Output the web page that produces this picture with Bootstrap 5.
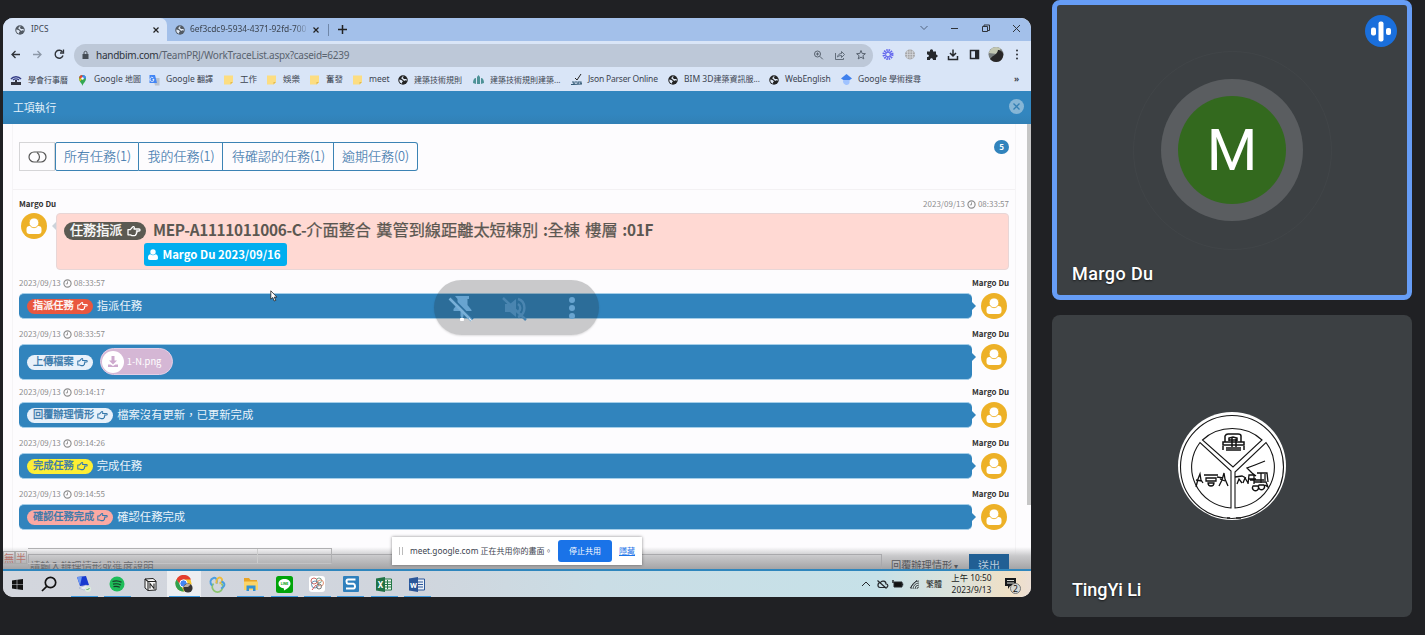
<!DOCTYPE html>
<html lang="zh-Hant">
<head>
<meta charset="utf-8">
<title>IPCS</title>
<link rel="stylesheet" href="https://cdn.jsdelivr.net/npm/bootstrap@5.3.0/dist/css/bootstrap.min.css">
<script src="https://cdn.jsdelivr.net/npm/bootstrap@5.3.0/dist/js/bootstrap.bundle.min.js"></script>
<style>
body{background:#202124;width:1425px;height:635px;overflow:hidden;font-family:"Noto Sans CJK TC",sans-serif;line-height:1}
svg{display:block;flex:none}
.shared{width:1028px;height:579px;margin:18px 0 0 3px;border-radius:10px;background:#fdfcfe;flex:none}
.ui{font-family:"Noto Sans","Noto Sans CJK TC",sans-serif;color:#3c4450}
/* browser chrome */
.strip{height:23px;background:#a3c0ea}
.tab{width:164px;background:#d9e5f7;border-radius:6px 7px 0 0;padding-left:12px;font-size:8.2px}
.tab2{width:153px;padding-left:8px;font-size:8.4px}
.fade-end{width:120px;white-space:nowrap;-webkit-mask-image:linear-gradient(90deg,#000 88%,transparent);mask-image:linear-gradient(90deg,#000 88%,transparent)}
.tools{height:27px;background:#d9e5f7}
.pill{width:799px;height:23px;background:#bdc8d8;border-radius:12px;font-size:10px;letter-spacing:-.25px;color:#59636f;padding:0 5px 0 7px;margin-top:1px}
.marks{height:23px;background:#d9e5f7;display:grid;grid-template-columns:67px 72px 74px 43px 43px 43px 46px 75px 98px 97px 101px 72px 173px 20px;padding-left:7px;align-items:center;font-size:8.5px;white-space:nowrap}
.marks>span{display:flex;align-items:center;gap:6px}
.cj{font-size:8.5px}
.cj8{font-size:8px}
.bluebar{height:33px;background:linear-gradient(#3286bf 70%,#3180b5);color:#e6f2fa;padding:0 7px 0 10px;font-size:10.8px}
/* page */
.page-area{height:445px;overflow:hidden;position:relative}
.panel{width:1004px;margin-left:9px;border:solid #f5f4f6;border-width:0 1px;height:445px;padding:18px 6px 0 6px}
.filters{height:29px}
.filters>span{border:1px solid #3c83b4;border-left-width:0;color:#3c77ac;font-size:13px;font-weight:300;-webkit-text-stroke:.12px;display:flex;align-items:center;justify-content:center;height:29px;padding:0 0 2px 1px}
.filters>span:first-child{border-color:#d5d5d7;border-left-width:1px;color:#555;width:36px;padding:0}
.filters>span:nth-child(2){border-left-width:1px;border-radius:2px 0 0 2px}
.filters>span:last-child{border-radius:0 3px 3px 0}
.count{width:15px;height:14px;border-radius:7px;background:#3183bc;color:#fff;font-weight:700;font-size:8px;margin-top:-2px}
.rule{height:1px;background:#f3f1f3;margin:18px -6px 8px}
.who{font-weight:700;font-size:8px;color:#333;height:12px;line-height:12px;white-space:nowrap}
.when{font-size:8px;color:#8e8e8e;height:12px;line-height:12px;display:flex;gap:2px;align-items:center}
.pink{width:953px;height:57px;background:#ffd9d3;border:1px solid #e8d6d6;border-radius:4px;position:relative;padding:7px 0 0 7px}
.pink:before{content:"";position:absolute;left:-5px;top:8px;border:4px solid transparent;border-right-color:#ccd3da;border-left:0}
.tagp{border-radius:20px;display:inline-flex;align-items:center;-webkit-text-stroke:.3px;white-space:nowrap}
.headline{font-size:16.2px;color:#5b5751;white-space:nowrap;word-spacing:1.600px;-webkit-text-stroke:.25px}
.headline b{-webkit-text-stroke:0;font-size:15.3px;letter-spacing:-.3px}
.due{width:143px;height:23px;background:#00aeef;border-radius:3px;color:#fff;font-weight:700;font-size:11.4px;margin:2px 0 0 80px;padding-right:2px}
.entry{height:51px}
.bar{width:953px;height:26px;background:#3184bd;border:1px solid #a6cfe9;border-width:1px 0;border-radius:5px;position:relative;padding:0 0 1px 8px;color:#e9f3fa;font-size:11.35px;margin-top:4px}
.bar:after{content:"";position:absolute;right:-4px;top:8px;border:4px solid transparent;border-left-color:#3184bd;border-right:0}
.bar .tagp{font-size:10.2px;height:15px;padding:0 5px 1px 6px;gap:3px;margin:1px 4px 0 0;color:#3678ab;background:#e8f1fa}
.right-col{width:37px}
.right-col svg{margin:4px 0 0 9px}
.file{width:73px;height:27px;border-radius:14px;background:#d5b7d5;border:1px solid #e4cfe6;color:#fff;font-size:9.4px;margin-left:3px;padding-left:1px;gap:3px}
.thumb{position:absolute;right:0;top:0;width:4px;height:381px;background:#c6c6c6}
.replybar{position:absolute;left:0;right:0;bottom:0;height:22px;background:linear-gradient(rgba(160,160,162,0),#c9c9cb 40%,#a4a4a6);overflow:hidden}
.replybar .reply{margin:7px 0 0 25px;width:981px;height:30px;font-size:11px;color:#6c6d70}
.reply>span{height:30px;padding-top:6px}
.ime{position:absolute;left:0;top:4px;font-size:10px;color:#b5736c}
.ime i{font-style:normal;border:1px solid #aaa;width:12px;height:13px;display:flex;align-items:center;justify-content:center}
.outl{position:absolute;left:25px;top:1px;width:304px;height:16px;border:1px solid #b0b0b2;border-bottom-color:#c3c3c5;border-left:0}
.outl:before{content:"";position:absolute;left:229px;top:0;height:14px;border-left:1px solid #ccc}
.sharebox{position:absolute;left:389px;top:413px;width:250px;height:28px;background:#fff;box-shadow:0 0 3px rgba(0,0,0,.45);font-size:8.3px;padding-left:7px}
.stop{background:#1a73e8;color:#fff;border-radius:3px;width:54px;height:22px;font-size:8px}
.hover-pill{position:absolute;left:431px;top:156px;width:165px;height:55px;border-radius:28px;background:rgba(32,33,36,.23);box-shadow:0 1px 2px rgba(0,0,0,.12)}
.pointer{position:absolute;left:267px;top:166px}
/* taskbar */
.task{height:28px;border-top:2px solid #2f86bd;background:linear-gradient(90deg,#d3d6dd 0,#d0d5dd 40%,#cadde5 58%,#c6e1e8 85%,#dde2da 93%,#f0e0c5 98%,#ecdfd5)}
.app{width:33.35px;height:26px;display:flex;align-items:center;justify-content:center}
.open{background:linear-gradient(#3b97dd,#3b97dd) center bottom/27px 1.5px no-repeat}
.app.front{background:linear-gradient(#3b97dd,#3b97dd) center bottom/31px 1.5px no-repeat,#eceef1}
/* call tiles */
.tile{width:360px;background:#3c4043;border-radius:8px;position:relative}
.t1{height:300px;border:5px solid #669df6}
.t2{height:302px;margin-top:15px}
.nm{position:absolute;left:20px;bottom:18px;font-family:Roboto,sans-serif;font-weight:500;font-size:18px;letter-spacing:-.1px;color:#fff;text-shadow:0 1px 2px rgba(0,0,0,.6)}
.t1 .nm{left:15px;bottom:12px;letter-spacing:.4px}
.ring{position:absolute;border-radius:50%}
.audio{position:absolute;right:10px;top:10px}
</style>
</head>
<body>
<svg width="0" height="0" class="position-absolute">
<symbol id="globe" viewBox="0 0 16 16"><circle cx="8" cy="8" r="7.600" fill="currentColor"/><path d="M2.200 7 5.500 8l2.500 2-1.500 1.500v2.300A6.300 6.300 0 0 1 2.200 7M9.500 2.200 7.500 4.500 9.700 6.500l4-.3.4 2.800-2.500-.8-1.600 1.300L6.500 6.500 5 5.200l2-3z" fill="#dfe8f5"/></symbol>
<symbol id="hand" viewBox="0 0 14 12"><path d="M1 4.600h2.300L5.600 2c.5-.8 1.900-.5 1.700.7L7 4h5c1.400 0 1.400 2 0 2H9.400c.9.300.9 1.600-.1 1.800.6.600.2 1.500-.6 1.600.2.900-.3 1.200-1.200 1.200H5L3.400 9.800H1z" fill="none" stroke="currentColor" stroke-width="1.300" stroke-linejoin="round"/></symbol>
<symbol id="clk" viewBox="0 0 10 10"><circle cx="5" cy="5" r="4" fill="none" stroke="currentColor" stroke-width="1.300"/><path d="M5 2.600v2.800H3.200" fill="none" stroke="currentColor"/></symbol>
<symbol id="ava" viewBox="0 0 26 26"><circle cx="13" cy="13" r="13" fill="#edb127"/><rect x="5.500" y="13" width="15" height="8" rx="3" fill="#fff"/><circle cx="13" cy="9.800" r="4.900" fill="#fff" stroke="#edb127" stroke-width=".9"/></symbol>
<symbol id="note" viewBox="0 0 10 10"><path d="M.5.500h9V7L7 9.500H.500z" fill="#fcdd82"/><path d="M9.500 7H7v2.500z" fill="#e2b94c"/></symbol>
</svg>
<div class="d-flex">
<div class="shared overflow-hidden">
  <div class="strip ui d-flex align-items-stretch">
    <div class="tab d-flex align-items-center"><svg width="10" height="10" color="#525a64"><use href="#globe"/></svg><span class="ms-1 me-auto" style="padding-left:2px">IPCS</span><svg class="me-2" width="6" height="6" viewBox="0 0 6 6"><path d="m.5.500 5 5m0-5-5 5" stroke="#222" stroke-width="1.200"/></svg></div>
    <div class="tab2 d-flex align-items-center"><svg width="10" height="10" color="#525a64"><use href="#globe"/></svg><span class="fade-end me-1" style="margin-left:5px;width:119px">6ef3cdc9-5934-4371-92fd-700</span><svg width="6" height="6" viewBox="0 0 6 6"><path d="m.5.500 5 5m0-5-5 5" stroke="#222" stroke-width="1.200"/></svg></div>
    <svg width="30" height="23" viewBox="0 0 30 23"><path d="M8.500 6v12" stroke="#6f87a9"/><path d="M18 11.500h9M22.500 7v9" stroke="#222" stroke-width="1.500"/></svg>
    <svg class="ms-auto" width="118" height="23" viewBox="0 0 118 23" fill="none" stroke="#30343a"><path d="m7.500 8 3.500 3.500L14.500 8" stroke="#53647f"/><path d="M38 10.500h7"/><path d="M69.500 8.500h5v5h-5zM71 8V7h5.500v5.500H75"/><path d="m100 7 7 7m0-7-7 7"/></svg>
  </div>
  <div class="tools d-flex align-items-center">
    <svg width="71" height="27" viewBox="0 0 71 27" fill="none" stroke="#30343a" stroke-width="1.300"><path d="M17 13.500H9m3.500-3.500L9 13.500l3.500 3.500"/><path d="M30 13.500h8M34.500 10l3.500 3.500-3.500 3.500" stroke="#8d98a8"/><path d="M59.500 11A4 4 0 1 0 60 14.500" stroke-width="1.400"/><path d="M60.500 8.500v3.500H57"/></svg>
    <div class="pill ui d-flex align-items-center">
      <svg width="9" height="10" viewBox="0 0 9 10"><path d="M1.500 4h6v5h-6z" fill="#454c55"/><path d="M3 4.500V2.800a1.500 1.500 0 0 1 3 0v1.700" fill="none" stroke="#454c55"/></svg>
      <span style="margin-left:6px"><span style="color:#2d333b">handbim.com</span>/TeamPRJ/WorkTraceList.aspx?caseid=6239</span>
      <svg class="ms-auto" width="55" height="12" viewBox="0 0 55 12" fill="none" stroke="#58626f"><circle cx="4.500" cy="5" r="3"/><path d="m6.800 7.300 3 3M3 5h3M4.500 3.500v3"/><path d="M22.500 4v6.500h8V9M24.500 8c.5-2.500 2-3.500 4-3.500V2.500l3 3-3 3V6.500c-2 0-3 .5-4 1.500z" stroke-width=".9"/><path d="m48 1.500 1.200 3 3.200.2-2.500 2 .9 3.200L48 8.100l-2.800 1.800.9-3.200-2.500-2 3.200-.2z"/></svg>
    </div>
    <svg width="158" height="27" viewBox="0 0 158 27"><g stroke="#6366ee" stroke-width="1.500" fill="none"><circle cx="15" cy="13.500" r="3.700" stroke-dasharray="1.200 .74" stroke-width="3.600"/><circle cx="15" cy="13.500" r="2.400" stroke-width="1"/></g><circle cx="37" cy="13.500" r="5" fill="#a6a6a8"/><path d="M32 13.500h10M37 8.500v10M33 11h8M33 16h8M34.500 9.500v8M39.500 9.500v8" stroke="#d7dae0" stroke-width=".7"/><path d="M54 10.500h3c-.6-3 3.600-3 3 0h3v3c2.200 0 2.200 3 0 3v2.500h-3c0-2.500-3-2.500-3 0h-3V16c2.600 0 2.600-2.600 0-2.600z" fill="#25282d"/><path d="M80 8.500v6.500M77 12l3 3 3-3M75.500 15v3.500h9V15" fill="none" stroke="#25282d" stroke-width="1.500"/><path d="M97.500 9.500h8v8h-8z" fill="none" stroke="#25282d" stroke-width="1.500"/><path d="M102 9h4v9h-4z" fill="#25282d"/><circle cx="123" cy="13.500" r="7.500" fill="#777c7c"/><path d="M115.800 12a7.500 7.500 0 0 1 12-4.300L124 13z" fill="#c3c7b2"/><path d="M117 18c3-4 7-4 8-9 2 0 5 2 5.300 4-.1 9-9 10-13.300 5" fill="#292728"/><g fill="#30343a"><circle cx="144" cy="9.500" r="1"/><circle cx="144" cy="13.500" r="1"/><circle cx="144" cy="17.500" r="1"/></g></svg>
  </div>
  <div class="marks ui">
    <span><svg width="12" height="12" viewBox="0 0 12 12"><path d="M1 5a6 5 0 0 1 10 0M3 6a4 3 0 0 1 6 0" fill="none" stroke="#353d88" stroke-width="1.500"/><path d="M1 8h10v3H1zM5 6h2v3H5z" fill="#343640"/></svg><span class="cj8">學會行事曆</span></span>
    <span><svg width="11" height="12" viewBox="0 0 11 12"><path d="M5.500 12C5 9 2 8 2 4.500a3.500 3.500 0 0 1 7 0C9 8 6 9 5.500 12" fill="#34a853"/><path d="M2.100 4A3.500 3.500 0 0 1 5.500 1v3z" fill="#ea4335"/><path d="M5.500 1A3.500 3.500 0 0 1 9 4.500H5.500z" fill="#4285f4"/><path d="M2 4.500h3L3 7.500z" fill="#fbbc04"/><circle cx="5.500" cy="4.500" r="1.200" fill="#fff"/></svg><span>Google <span class="cj8">地圖</span></span></span>
    <span><svg width="11" height="12" viewBox="0 0 11 12"><path d="M4 4h6.500v7.500H6z" fill="#b9c2ce"/><path d="M.5 1H6l2 8H.500z" fill="#4285f4"/><path d="M5 5.500a2 2 0 1 1-.6-1.500M5 5.500H3.500" stroke="#fff" stroke-width=".8" fill="none"/></svg><span>Google <span class="cj8">翻譯</span></span></span>
    <span><svg width="11" height="10"><use href="#note"/></svg><span class="cj">工作</span></span>
    <span><svg width="11" height="10"><use href="#note"/></svg><span class="cj">娛樂</span></span>
    <span><svg width="11" height="10"><use href="#note"/></svg><span class="cj">奮發</span></span>
    <span><svg width="11" height="10"><use href="#note"/></svg><span>meet</span></span>
    <span><svg width="10" height="10" color="#222"><use href="#globe"/></svg><span class="cj8">建築技術規則</span></span>
    <span><svg width="11" height="10" viewBox="0 0 11 10"><path d="M0 8c0-3 1-5 3-5v6zM4 9V2l1.500-2L7 2v7zM8 9V3c2 0 3 2 3 5z" fill="#4e9297"/></svg><span class="cj8">建築技術規則建築...</span></span>
    <span><svg width="11" height="11" viewBox="0 0 11 11"><path d="m4 4 2 2 4-6" fill="none" stroke="#222"/><path d="M0 10.500 11 10M1 8h2v2M4 8h2M7 10V8h3v2" stroke="#355b77" stroke-width="1.200" fill="none"/></svg><span style="letter-spacing:-.2px">Json Parser Online</span></span>
    <span><svg width="10" height="10" color="#222"><use href="#globe"/></svg><span>BIM 3D<span class="cj8">建築資訊服...</span></span></span>
    <span><svg width="10" height="10" color="#222"><use href="#globe"/></svg><span style="letter-spacing:-.1px">WebEnglish</span></span>
    <span><svg width="11" height="11" viewBox="0 0 11 11"><path d="M5.500 0 11 4.500 5.500 8 0 4.500z" fill="#3f80ed"/><path d="M2.500 6a3 3 0 0 0 6 3V6z" fill="#a0c3ff"/></svg><span>Google <span class="cj8">學術搜尋</span></span></span>
    <b>»</b>
  </div>
  <div class="bluebar d-flex align-items-center justify-content-between"><span>工項執行</span><svg width="15" height="15" viewBox="0 0 15 15" style="margin-bottom:2px"><circle cx="7.500" cy="7.500" r="7.500" fill="#86b6d6"/><path d="m4.500 4.500 6 6m0-6-6 6" stroke="#3580b4" stroke-width="1.300"/></svg></div>

  <div class="page-area">
    <div class="panel">
      <div class="d-flex justify-content-between align-items-center">
        <div class="filters d-flex"><span><svg width="19" height="12" viewBox="0 0 19 12" fill="none" stroke="#555" stroke-width="1.200"><rect x="1" y="1" width="17" height="10" rx="5"/><path d="M9 1.500a5.300 5.300 0 0 1 0 9"/></svg></span><span style="width:84px">所有任務(1)</span><span style="width:84px">我的任務(1)</span><span style="width:111px">待確認的任務(1)</span><span style="width:84px;padding-left:0">逾期任務(0)</span></div>
        <div class="count d-flex align-items-center justify-content-center align-self-start">5</div>
      </div>
      <div class="rule"></div>
      <div class="d-flex justify-content-between"><span class="who">Margo Du</span><span class="when">2023/09/13 <svg width="9" height="9"><use href="#clk"/></svg> 08:33:57</span></div>
      <div class="d-flex" style="height:67px;padding-top:3px">
        <svg width="26" height="26" style="margin:0 9px 0 2px"><use href="#ava"/></svg>
        <div class="pink">
          <div class="d-flex align-items-center" style="height:20px"><span class="tagp" style="background:#5b5a52;color:#fff;font-size:13.100px;width:82px;height:18px;padding:0 5px 2px 6px;gap:5px">任務指派<svg width="14" height="12" style="margin-top:2px"><use href="#hand"/></svg></span><span class="headline" style="margin:-4px 0 0 7px"><b>MEP-A1111011006-C-</b>介面整合 糞管到線距離太短棟別<b> :</b>全棟 樓層<b> :01F</b></span></div>
          <div class="due d-flex align-items-center justify-content-center gap-1"><svg width="10" height="11" viewBox="0 0 10 11" fill="#fff"><circle cx="5" cy="3" r="2.700"/><path d="M0 9c0-3 1-3.500 2.500-3.800a4 4 0 0 0 5 0C9 5.500 10 6 10 9c0 1.300-.5 2-2 2H2C.5 11 0 10.300 0 9"/></svg>Margo Du 2023/09/16</div>
        </div>
      </div>
      <div class="entry d-flex"><div><div class="when">2023/09/13 <svg width="9" height="9"><use href="#clk"/></svg> 08:33:57</div><div class="bar d-flex align-items-center"><span class="tagp" style="background:#e9573f;color:#fff">指派任務<svg width="11" height="10"><use href="#hand"/></svg></span>指派任務</div></div><div class="right-col"><div class="who">Margo Du</div><svg width="26" height="26"><use href="#ava"/></svg></div></div>
      <div class="entry d-flex" style="height:58px"><div><div class="when">2023/09/13 <svg width="9" height="9"><use href="#clk"/></svg> 08:33:57</div><div class="bar d-flex align-items-center" style="height:36px"><span class="tagp">上傳檔案<svg width="11" height="10"><use href="#hand"/></svg></span><span class="file d-flex align-items-center"><svg width="22" height="22" viewBox="0 0 22 22"><circle cx="11" cy="11" r="11" fill="#fff"/><path d="M9.500 5h3v4.500H15L11 13.500 7 9.500h2.500zM6 13.500h2.500l2.500 1.500 2.500-1.500H16V16H6z" fill="#cda9cd"/></svg>1-N.png</span></div></div><div class="right-col"><div class="who">Margo Du</div><svg width="26" height="26"><use href="#ava"/></svg></div></div>
      <div class="entry d-flex"><div><div class="when">2023/09/13 <svg width="9" height="9"><use href="#clk"/></svg> 09:14:17</div><div class="bar d-flex align-items-center"><span class="tagp">回覆辦理情形<svg width="11" height="10"><use href="#hand"/></svg></span>檔案沒有更新，已更新完成</div></div><div class="right-col"><div class="who">Margo Du</div><svg width="26" height="26"><use href="#ava"/></svg></div></div>
      <div class="entry d-flex"><div><div class="when">2023/09/13 <svg width="9" height="9"><use href="#clk"/></svg> 09:14:26</div><div class="bar d-flex align-items-center"><span class="tagp" style="background:#fcee35">完成任務<svg width="11" height="10"><use href="#hand"/></svg></span>完成任務</div></div><div class="right-col"><div class="who">Margo Du</div><svg width="26" height="26"><use href="#ava"/></svg></div></div>
      <div class="entry d-flex"><div><div class="when">2023/09/13 <svg width="9" height="9"><use href="#clk"/></svg> 09:14:55</div><div class="bar d-flex align-items-center"><span class="tagp" style="background:#fba9a3">確認任務完成<svg width="11" height="10"><use href="#hand"/></svg></span>確認任務完成</div></div><div class="right-col"><div class="who">Margo Du</div><svg width="26" height="26"><use href="#ava"/></svg></div></div>
    </div>
    <div class="thumb"></div>
    <div class="replybar">
      <div class="reply d-flex"><span style="width:854px;border:1px solid #a9a9ac;padding-left:1px;font-size:10.300px">請輸入辦理情形或進度說明</span><span style="width:87px;padding-left:9px;color:#55565a;font-size:10.200px">回覆辦理情形 <span style="font-size:8px">▾</span></span><span class="text-center" style="width:40px;background:#215f94;color:#b9cbdb">送出</span></div>
      <div class="outl"></div>
      <div class="ime d-flex"><i>無</i><i>半</i></div>
    </div>
    <div class="sharebox ui d-flex align-items-center"><svg width="4" height="8" viewBox="0 0 4 8"><path d="M.5 0v8M3.500 0v8" stroke="#bbb"/></svg><span style="margin-left:7px;width:148px;white-space:nowrap">meet.google.com <span class="cj8">正在共用你的畫面。</span></span><span class="stop d-flex align-items-center justify-content-center">停止共用</span><u style="margin-left:7px;color:#1a73e8;font-size:8px">隱藏</u></div>
    <div class="hover-pill"><svg width="165" height="55" viewBox="0 0 165 55"><g fill="#68a4d0"><path d="M21 16h14v3h-1.500v6l4 5v1h-8v5l-1.500 4-1.500-4v-5h-7v-2l4-5v-5z"/><path d="m17 17 22 22" stroke="#2f709e" stroke-width="2"/><path d="m15.500 18.500 22 22" stroke="#79b0d8" stroke-width="2.500"/><path d="M26.500 38.500h3v2h-3zM35 38.500l2.500 2" fill="#fff" stroke="#fff"/><circle cx="138" cy="20" r="3"/><circle cx="138" cy="28" r="3"/><circle cx="138" cy="36" r="3"/></g><g fill="none" stroke="#4a85b0" stroke-width="2.500"><path d="M71 24h5l6-5v18l-6-5h-5z" fill="#4a85b0" stroke="none"/><path d="M84 24c3 2 3 6 0 8M84 19c8 2 9 15 0 18M69 18l23 22"/></g></svg></div>
    <svg class="pointer" width="8" height="12" viewBox="0 0 8 12"><path d="M.8.800v8.400l2-1.700L4.200 11l1.600-.6-1.500-3.300h2.600z" fill="#fff" stroke="#222" stroke-width=".8"/></svg>
  </div>

  <div class="task d-flex align-items-center">
    <span class="app" style="width:31px;padding-right:3px"><svg width="11" height="11" viewBox="0 0 11 11"><path d="m0 1.500 4.700-.7v4.400H0zM5.300.700 11 0v5.200H5.300zM0 5.800h4.700v4.400L0 9.500zM5.300 5.800H11V11l-5.700-.8z" fill="#111"/></svg></span>
    <span class="app" style="padding-right:3px"><svg width="16" height="16" viewBox="0 0 16 16" fill="none" stroke="#111" stroke-width="1.700"><circle cx="9.500" cy="6.500" r="5.200"/><path d="M5.700 10.300 1 15"/></svg></span>
    <span class="app open"><svg width="16" height="16" viewBox="0 0 16 16"><path d="m1 1 9-1 3 9-9 1z" fill="#173bd0"/><path d="M1 1 6 .4 4 9.500z" fill="#6f9af2"/><path d="m3 12 7-3 4 2-6 3z" fill="#e7ecf5" stroke="#90a3c4" stroke-width=".5"/><circle cx="12" cy="13" r="3" fill="#dcebdd"/><path d="m10.500 13 1 1 2-2" stroke="#4da95d" fill="none"/></svg></span>
    <span class="app open"><svg width="16" height="16" viewBox="0 0 16 16"><circle cx="8" cy="8" r="7.500" fill="#1ebc59"/><path d="M3.500 5.500c3-1 6.500-.7 9 .8M4 8.200c3-.8 5.500-.5 7.800.8M4.500 10.700c2.500-.6 4.500-.3 6.300.6" fill="none" stroke="#173e28" stroke-width="1.200"/></svg></span>
    <span class="app"><svg width="13" height="13" viewBox="0 0 13 13"><path d="m1 1 8-.5L12 3v9l-8 .5L1 10z" fill="#f7f7f7" stroke="#222"/><path d="M4 3.500h8M4 3.500v9M1 1l3 2.500M6 10.500V5.500l4 5v-5" stroke="#222" fill="none" stroke-width="1.100"/></svg></span>
    <span class="app front"><svg width="18" height="18" viewBox="0 0 18 18"><circle cx="8.500" cy="8.500" r="8" fill="#f7c62d"/><path d="M1.500 4.500a8 8 0 0 1 14.500 0H8.500L5 10z" fill="#e43e2e"/><path d="M1.500 4.500 6 11l3 5.500a8 8 0 0 1-7.500-12" fill="#2fa14f"/><circle cx="8.500" cy="8.500" r="3.700" fill="#4285f4" stroke="#fff"/><circle cx="13" cy="13" r="4.600" fill="#363433"/><path d="M8.600 12a4.600 4.600 0 0 1 7-2.500L13 12z" fill="#b9aca0"/></svg></span>
    <span class="app"><svg width="17" height="17" viewBox="0 0 17 17" fill="none" stroke-width="1.900"><path d="M4.500 7.500a5.200 5.200 0 1 0 8 0" stroke="#8cc56f"/><path d="M7.500 7.500C9 4.500 7 1 4.500 2 1 3 .5 7 3 9.500" stroke="#4a9ee0"/><path d="M7.500 7.500C7 3.500 9.500.5 12 2c2 1.500 1 4.500-1.500 5.500" stroke="#eebc3b"/><path d="M12.500 5.500c4 1.500 4 5-.5 7" stroke="#4a9ee0"/></svg></span>
    <span class="app open"><svg width="16" height="15" viewBox="0 0 16 15"><path d="M1 1h5l1.500 2H14v10H1z" fill="#e8a427"/><path d="M1 4.500h14V13H1z" fill="#fbd468"/><path d="M3.500 14V8.500h9V14H10v-2.500H6V14z" fill="#3292d4"/></svg></span>
    <span class="app open"><svg width="17" height="17" viewBox="0 0 17 17"><rect width="17" height="17" rx="2.500" fill="#00a409"/><path d="M8.500 3C5 3 2.500 5 2.500 7.700c0 2.500 2 4.100 5 4.600.6.200.6 1 .4 2.200 3-1.500 6.600-4 6.600-6.800C14.500 5 12 3 8.500 3" fill="#fff"/><text x="8.500" y="9" font-size="3.500" font-weight="700" text-anchor="middle" fill="#00a409" font-family="Roboto">LINE</text></svg></span>
    <span class="app open"><svg width="16" height="16" viewBox="0 0 16 16"><rect width="16" height="16" rx="3" fill="#fff"/><g fill="none" stroke-width=".9"><circle cx="5" cy="5" r="3" stroke="#cb5b57"/><circle cx="10" cy="4.500" r="2.500" stroke="#6b9c86"/><circle cx="6" cy="8.500" r="3.500" stroke="#5b87ab"/><circle cx="11.500" cy="7" r="3" stroke="#dc8765"/><circle cx="10" cy="10.500" r="2.500" stroke="#666"/><path d="m3 14 4-5" stroke="#d94747"/></g></svg></span>
    <span class="app open"><svg width="16" height="16" viewBox="0 0 16 16"><rect width="16" height="16" rx="1" fill="#2f80bd"/><path d="M12.500 3.500H5c-2 0-2 4 0 4.300h5.500c2 .5 2 4.500 0 4.700H3" fill="none" stroke="#fff" stroke-width="2"/></svg></span>
    <span class="app open"><svg width="16" height="15" viewBox="0 0 16 15"><path d="M7 2h8.500v11H7z" fill="#e9f3eb" stroke="#247847"/><path d="M11.500 3v9M8 5h7M8 7.500h7M8 10h7" stroke="#247847"/><path d="m0 1.500 9-1.500v15L0 13.500z" fill="#217346"/><text x="4.500" y="10.500" text-anchor="middle" font-size="8.500" font-weight="700" fill="#fff" font-family="Roboto">X</text></svg></span>
    <span class="app open"><svg width="16" height="15" viewBox="0 0 16 15"><path d="M7 2h8.500v11H7z" fill="#eaf0f8" stroke="#2b579a"/><path d="M9 5h5M9 7.500h5M9 10h5" stroke="#2b579a"/><path d="m0 1.500 9-1.500v15L0 13.500z" fill="#2b579a"/><text x="4.500" y="10.500" text-anchor="middle" font-size="8" font-weight="700" fill="#fff" font-family="Roboto">W</text></svg></span>
    <svg class="ms-auto" width="60" height="14" viewBox="0 0 60 14" fill="none" stroke="#25282c"><path d="m2 9 4-4 4 4"/><path d="M20 10.500h6c2.500 0 2.500-3.500 0-3.500 0-3.500-4.500-3.500-5.500-1.500-3 0-3.500 4.500-.5 5M17.500 3.500l9 8" stroke-width="1.200"/><path d="M34 5h8v5h-8z" fill="#111"/><path d="M33 3v3M42.500 6.500v2" stroke-width="1.500"/><path d="M51 12a8 8 0 0 1 8-8M53 12a6 6 0 0 1 6-6M55 12a4 4 0 0 1 4-4M57 12a2 2 0 0 1 2-2M50 11l7-8" stroke-width=".8"/></svg>
    <span class="ui" style="font-size:8px;margin-left:6px;color:#222">繁體</span>
    <span class="ui text-center" style="font-size:8.400px;line-height:12.300px;margin-left:7px;width:45px;color:#222;white-space:nowrap">上午 10:50<br>2023/9/13</span>
    <svg width="34" height="26" viewBox="0 0 34 26" style="margin:0 0 0 3px"><path d="M8 7h11v8h-6l-2 3v-3H8z" fill="#17191b"/><path d="M10 9.500h7M10 12h7" stroke="#d8dad4"/><circle cx="18.500" cy="17.500" r="5" fill="#d5d8d5" stroke="#777"/><text x="18.500" y="20.500" text-anchor="middle" font-family="Noto Sans" font-size="8.500" fill="#111">2</text></svg>
  </div>
</div>

<div style="margin-left:21px">
  <div class="tile t1">
    <div class="ring" style="left:76px;top:46px;width:199px;height:199px;border:1px solid #414548"></div>
    <div class="ring" style="left:104px;top:74px;width:142px;height:142px;background:#5a5d60"></div>
    <div class="ring d-flex align-items-center justify-content-center" style="left:121px;top:91px;width:108px;height:108px;background:#33691e;color:#fff;font:400 58px/1 Roboto,sans-serif;padding-bottom:1px">M</div>
    <svg class="audio" width="32" height="32" viewBox="0 0 32 32"><circle cx="16" cy="16" r="16" fill="#1a6fdc"/><g fill="#fff"><rect x="13.500" y="6.500" width="5" height="20" rx="2"/><rect x="6" y="12.500" width="5" height="8" rx="2"/><rect x="21" y="13" width="5" height="7" rx="2"/></g></svg>
    <div class="nm">Margo Du</div>
  </div>
  <div class="tile t2">
    <svg style="position:absolute;left:126px;top:97px" width="108" height="108" viewBox="-54 -54 108 108"><circle r="54" fill="#fff"/><g fill="none" stroke="#151515" stroke-width="1.100"><circle cx="0" cy="1" r="51.500"/><path d="M-29.500-26A42.500 40 0 0 1 30-26L1 1zM-32-23.500A42 41 0 0 0-1 42V5zM34-23.500A42 41 0 0 1 3 42V6z"/></g><path d="M-5 52h3M4 52h5" stroke="#222" stroke-width="1.500"/>
    <g fill="none" stroke="#111" stroke-width="1.500"><path d="M-7-24v-6q1-2 3-2H6q3 0 3 2v6M-9-21h21v-3H-9zM-3-25v-3l4-1 4 1v3M-3-26h8M-9-20v4M12-20v4M-6-18h15M-6-16h15M0-28v9M4-28v9"/></g>
    <g fill="none" stroke="#111" stroke-width="1.300"><path d="M-36 21l2-8 2-5 1 6 2 3M-36 14l6 1M-28 9h14M-26 12h10v3h-10zM-24 17a3 3 0 1 0 6 0zM-15 11l6 1M-13 20l3-6 2-7 1 6 3 7M-12 13l5 2M3 11l7-1 4 2M5 18l2-5 3 4M11 17l2-5 3 5M16 18l1-9h5v9M17 13h7M22 16h12l2 5-3-2M25 7h10l1 9M29 7v10M33 8v7M21 20a3 3 0 1 0 5 0zM27 19a3 3 0 1 0 5 0zM33-5l-10 4-8 3 5 5 4 3M18 14h14"/></g></svg>
    <div class="nm">TingYi Li</div>
  </div>
</div>
</div>
</body>
</html>
